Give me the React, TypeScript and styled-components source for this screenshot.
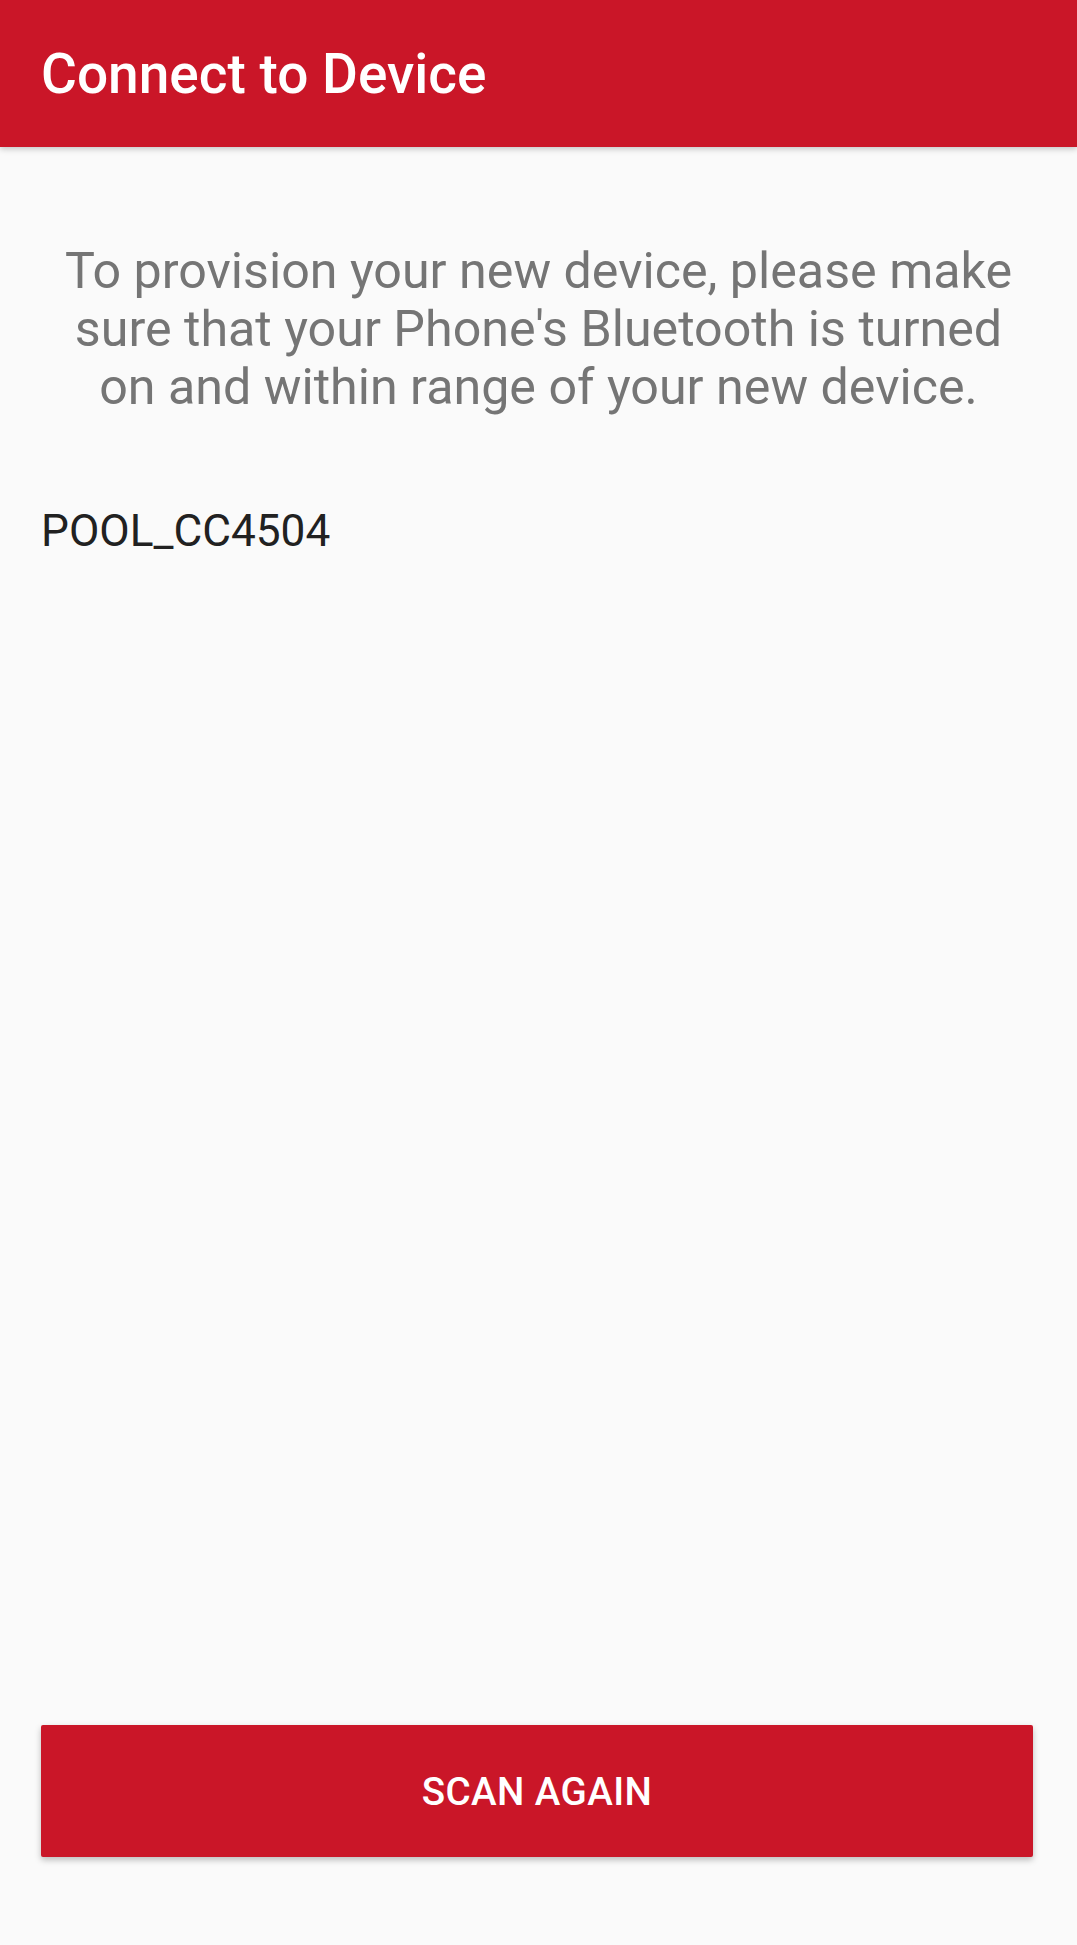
import React from "react";
import styled, { createGlobalStyle } from "styled-components";

const Global = createGlobalStyle`
  html, body { margin: 0; padding: 0; background: #fafafa; }
  body { font-family: Roboto, "Noto Sans", Arial, sans-serif; }
  * { box-sizing: border-box; }
`;

const Screen = styled.div`
  width: 1077px;
  height: 1945px;
  background: #fafafa;
  display: flex;
  flex-direction: column;
`;

const AppBar = styled.header`
  height: 147px;
  flex: none;
  background: #ca1628;
  display: flex;
  align-items: center;
  padding: 0 41px;
  box-shadow: 0 2px 6px rgba(0, 0, 0, 0.22);
  position: relative;
  z-index: 1;
`;

const Title = styled.h1`
  margin: 0;
  color: #ffffff;
  font-family: Roboto, sans-serif;
  font-weight: 500;
  font-size: 55px;
  line-height: 1;
  transform: translateY(1px);
`;

const Content = styled.main`
  flex: 1;
  display: flex;
  flex-direction: column;
  padding: 95px 41px 0;
`;

const Intro = styled.p`
  margin: 0;
  color: #757575;
  font-family: Roboto, sans-serif;
  font-size: 50.2px;
  line-height: 58px;
  text-align: center;
  padding: 0 8px;
`;

const DeviceItem = styled.div`
  margin-top: 89px;
  color: #212121;
  font-family: Roboto, sans-serif;
  font-size: 44.2px;
  line-height: 52px;
`;

const Footer = styled.div`
  flex: none;
  padding: 0 44px 88px 41px;
`;

const Button = styled.button`
  width: 992px;
  height: 132px;
  border: none;
  border-radius: 2px;
  background: #ca1628;
  color: #ffffff;
  font-family: Roboto, sans-serif;
  font-weight: 500;
  font-size: 38.6px;
  letter-spacing: 0.4px;
  text-transform: uppercase;
  display: flex;
  align-items: center;
  justify-content: center;
  box-shadow: 0 3px 6px rgba(0, 0, 0, 0.25);
  cursor: pointer;
`;

export default function App() {
  return (
    <>
      <Global />
      <Screen>
        <AppBar>
          <Title>Connect to Device</Title>
        </AppBar>
        <Content>
          <Intro>
            To provision your new device, please make sure that your Phone's
            Bluetooth is turned on and within range of your new device.
          </Intro>
          <DeviceItem>POOL_CC4504</DeviceItem>
        </Content>
        <Footer>
          <Button>Scan Again</Button>
        </Footer>
      </Screen>
    </>
  );
}
